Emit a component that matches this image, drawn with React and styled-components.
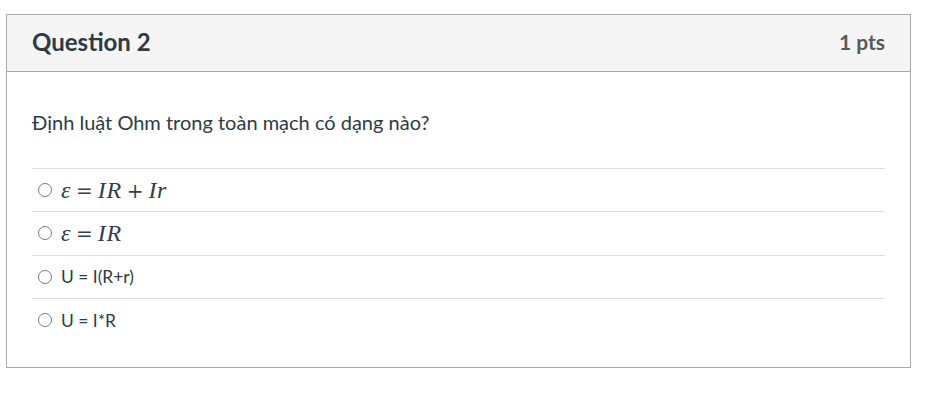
import React from "react";
import styled, { createGlobalStyle } from "styled-components";

const GlobalStyle = createGlobalStyle`
  html, body { margin: 0; padding: 0; background: #ffffff; }
  body { font-family: Lato, "Noto Sans", sans-serif; color: #2d3b45; }
  * { box-sizing: border-box; }
`;

const Page = styled.div`
  padding: 14px 0 0 6px;
`;

const Card = styled.div`
  width: 905px;
  border: 1px solid #aaaaaa;
  background: #ffffff;
`;

const Header = styled.div`
  display: flex;
  align-items: center;
  justify-content: space-between;
  height: 57px;
  padding: 0 25px 3px;
  background: #f5f5f5;
  border-bottom: 1px solid #aaaaaa;
`;

const Title = styled.h2`
  margin: 0;
  font-size: 24px;
  font-weight: 700;
  color: #2d3b45;
`;

const Points = styled.span`
  font-size: 21px;
  font-weight: 700;
  color: #565a5d;
`;

const Body = styled.div`
  padding: 35px 25px 25.67px;
`;

const QuestionText = styled.p`
  margin: 0 0 31px;
  font-size: 20px;
  line-height: 30px;
`;

const Answers = styled.div`
  display: flex;
  flex-direction: column;
`;

const Answer = styled.label`
  display: flex;
  align-items: center;
  height: 43.333px;
  border-top: 1px solid #dddddd;
  padding-left: 6px;
  gap: 9px;
  font-size: 17.4px;
`;

const Radio = styled.span`
  width: 14px;
  height: 14px;
  border: 1px solid #7a7a7a;
  border-radius: 50%;
  flex: none;
`;

const Math = styled.span`
  display: inline-flex;
  align-items: baseline;
  font-family: "Liberation Serif", "Times New Roman", serif;
  font-size: 24px;
  color: #33404a;
  white-space: nowrap;
`;

const Var = styled.i`
  font-style: italic;
  letter-spacing: 0.6px;
`;

const Op = styled.span`
  font-family: "DejaVu Serif", serif;
  font-size: 20px;
  margin: 0 ${(p) => p.$space}px;
`;

export default function App() {
  return (
    <>
      <GlobalStyle />
      <Page>
        <Card>
          <Header>
            <Title>Question 2</Title>
            <Points>1 pts</Points>
          </Header>
          <Body>
            <QuestionText>Định luật Ohm trong toàn mạch có dạng nào?</QuestionText>
            <Answers>
              <Answer>
                <Radio />
                <Math>
                  <Var>ε</Var>
                  <Op $space={5}>=</Op>
                  <Var>IR</Var>
                  <Op $space={5}>+</Op>
                  <Var>Ir</Var>
                </Math>
              </Answer>
              <Answer>
                <Radio />
                <Math>
                  <Var>ε</Var>
                  <Op $space={5}>=</Op>
                  <Var>IR</Var>
                </Math>
              </Answer>
              <Answer>
                <Radio />
                <span>U = I(R+r)</span>
              </Answer>
              <Answer>
                <Radio />
                <span>U = I*R</span>
              </Answer>
            </Answers>
          </Body>
        </Card>
      </Page>
    </>
  );
}
